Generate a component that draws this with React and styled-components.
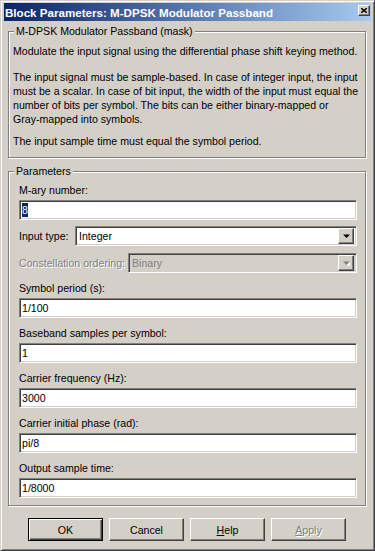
import React from "react";
import styled, { createGlobalStyle, css } from "styled-components";

const GlobalStyle = createGlobalStyle`
  html, body {
    margin: 0;
    padding: 0;
    background: #d4d0c8;
  }
  body {
    font-family: "Liberation Sans", Arial, sans-serif;
    font-size: 10.6px;
    color: #000;
  }
`;

const raised = css`
  border: 1px solid;
  border-color: #fff #404040 #404040 #fff;
  box-shadow: inset -1px -1px #808080, inset 1px 1px #d4d0c8;
`;

const sunken = css`
  border: 1px solid;
  border-color: #808080 #fff #fff #808080;
  box-shadow: inset 1px 1px #404040, inset -1px -1px #d4d0c8;
`;

const Window = styled.div`
  width: 375px;
  height: 551px;
  box-sizing: border-box;
  background: #d4d0c8;
  border: 1px solid;
  border-color: #d4d0c8 #404040 #404040 #d4d0c8;
  box-shadow: inset 1px 1px #fff, inset -1px -1px #808080;
  padding: 2px 3px 3px 3px;
  display: flex;
  flex-direction: column;
`;

const TitleBar = styled.div`
  height: 18px;
  display: flex;
  align-items: center;
  justify-content: space-between;
  background: linear-gradient(to right, #0a246a, #a6caf0);
  padding: 0 1px 0 1px;
`;

const TitleText = styled.span`
  color: #fff;
  font-weight: bold;
  font-size: 11.6px;
  white-space: nowrap;
`;

const CloseButton = styled.div`
  ${raised};
  width: 12px;
  height: 11px;
  box-sizing: border-box;
  background: #d4d0c8;
  align-self: flex-start;
  margin-top: 2px;
  display: flex;
  align-items: center;
  justify-content: center;
`;

const Content = styled.div`
  padding: 4px 5px 0 4px;
  display: flex;
  flex-direction: column;
`;

const GroupBox = styled.fieldset`
  margin: ${(p) => p.$top || 0}px 0 0 0;
  padding: 0;
  border: 1px solid #808080;
  box-shadow: inset 1px 1px #fff, 1px 1px #fff;
  min-width: 0;
`;

const GroupLegend = styled.legend`
  margin-left: 5px;
  padding: 0 2px;
  line-height: 13px;
  background: #d4d0c8;
  white-space: nowrap;
`;

const GroupBody = styled.div`
  padding: ${(p) => p.$pad};
  display: flex;
  flex-direction: column;
`;

const Para = styled.p`
  margin: ${(p) => p.$top}px 0 0 0;
  line-height: 14px;
  white-space: nowrap;
`;

const FieldLabel = styled.div`
  line-height: 14px;
  height: 14px;
  white-space: nowrap;
  margin-top: ${(p) => p.$top || 0}px;
  ${(p) =>
    p.$disabled &&
    css`
      color: #808080;
      text-shadow: 1px 1px #fff;
    `}
`;

const TextBox = styled.div`
  ${sunken};
  margin-top: 3px;
  height: 20px;
  box-sizing: border-box;
  background: #fff;
  padding: 0 2px;
  line-height: 18px;
  white-space: nowrap;
`;

const Selection = styled.span`
  background: #0a246a;
  color: #fff;
  padding: 1px 0;
`;

const SelectRow = styled.div`
  display: flex;
  align-items: center;
  margin-top: ${(p) => p.$top}px;
`;

const RowLabel = styled(FieldLabel)`
  width: ${(p) => p.$width}px;
  flex: none;
`;

const ComboBox = styled.div`
  ${sunken};
  flex: 1;
  height: 20px;
  box-sizing: border-box;
  background: ${(p) => (p.$disabled ? "#d4d0c8" : "#fff")};
  color: ${(p) => (p.$disabled ? "#808080" : "#000")};
  display: flex;
  align-items: center;
  padding: 2px 2px 2px 3px;
`;

const ComboText = styled.span`
  flex: 1;
  white-space: nowrap;
`;

const DropButton = styled.div`
  ${raised};
  width: 16px;
  height: 16px;
  box-sizing: border-box;
  background: #d4d0c8;
  display: flex;
  align-items: center;
  justify-content: center;
`;

const ButtonRow = styled.div`
  display: flex;
  justify-content: center;
  gap: 6px;
  margin-top: 12px;
`;

const PushButton = styled.div`
  ${raised};
  width: 75px;
  height: 23px;
  box-sizing: border-box;
  background: #d4d0c8;
  display: flex;
  align-items: center;
  justify-content: center;
  ${(p) =>
    p.$default &&
    css`
      border-color: #000;
      box-shadow: inset 1px 1px #fff, inset -1px -1px #404040,
        inset -2px -2px #808080;
    `}
  ${(p) =>
    p.$disabled &&
    css`
      color: #808080;
      text-shadow: 1px 1px #fff;
    `}
`;

const Mnemonic = styled.span`
  text-decoration: underline;
`;

const Arrow = ({ disabled }) => (
  <svg width="7" height="5" viewBox="0 0 7 5">
    {disabled && <path d="M2 1h7L5.5 5.5z" fill="#fff" />}
    <path d="M0 0.5h7L3.5 4z" fill={disabled ? "#808080" : "#000"} />
  </svg>
);

const Field = ({ label, value, selected }) => (
  <>
    <FieldLabel $top={8}>{label}</FieldLabel>
    <TextBox>{selected ? <Selection>{value}</Selection> : value}</TextBox>
  </>
);

export default function App() {
  return (
    <>
      <GlobalStyle />
      <Window>
        <TitleBar>
          <TitleText>Block Parameters: M-DPSK Modulator Passband</TitleText>
          <CloseButton>
            <svg width="6" height="5" viewBox="0 0 6 5">
              <path d="M0 0L6 5M6 0L0 5" stroke="#000" strokeWidth="1.4" />
            </svg>
          </CloseButton>
        </TitleBar>

        <Content>
          <GroupBox>
            <GroupLegend>M-DPSK Modulator Passband (mask)</GroupLegend>
            <GroupBody $pad="0 4px 9px 4px">
              <Para $top={6}>
                Modulate the input signal using the differential phase shift keying method.
              </Para>
              <Para $top={12}>
                The input signal must be sample-based. In case of integer input, the input
                <br />
                must be a scalar. In case of bit input, the width of the input must equal the
                <br />
                number of bits per symbol. The bits can be either binary-mapped or
                <br />
                Gray-mapped into symbols.
              </Para>
              <Para $top={8}>The input sample time must equal the symbol period.</Para>
            </GroupBody>
          </GroupBox>

          <GroupBox $top={7}>
            <GroupLegend>Parameters</GroupLegend>
            <GroupBody $pad="5px 8px 7px 10px">
              <FieldLabel>M-ary number:</FieldLabel>
              <TextBox>
                <Selection>8</Selection>
              </TextBox>

              <SelectRow $top={6}>
                <RowLabel $width={56}>Input type:</RowLabel>
                <ComboBox>
                  <ComboText>Integer</ComboText>
                  <DropButton>
                    <Arrow />
                  </DropButton>
                </ComboBox>
              </SelectRow>

              <SelectRow $top={7}>
                <RowLabel $width={109} $disabled>
                  Constellation ordering:
                </RowLabel>
                <ComboBox $disabled>
                  <ComboText>Binary</ComboText>
                  <DropButton>
                    <Arrow disabled />
                  </DropButton>
                </ComboBox>
              </SelectRow>

              <Field label="Symbol period (s):" value="1/100" />
              <Field label="Baseband samples per symbol:" value="1" />
              <Field label="Carrier frequency (Hz):" value="3000" />
              <Field label="Carrier initial phase (rad):" value="pi/8" />
              <Field label="Output sample time:" value="1/8000" />
            </GroupBody>
          </GroupBox>

          <ButtonRow>
            <PushButton $default>OK</PushButton>
            <PushButton>Cancel</PushButton>
            <PushButton>
              <span>
                <Mnemonic>H</Mnemonic>elp
              </span>
            </PushButton>
            <PushButton $disabled>
              <span>
                <Mnemonic>A</Mnemonic>pply
              </span>
            </PushButton>
          </ButtonRow>
        </Content>
      </Window>
    </>
  );
}
